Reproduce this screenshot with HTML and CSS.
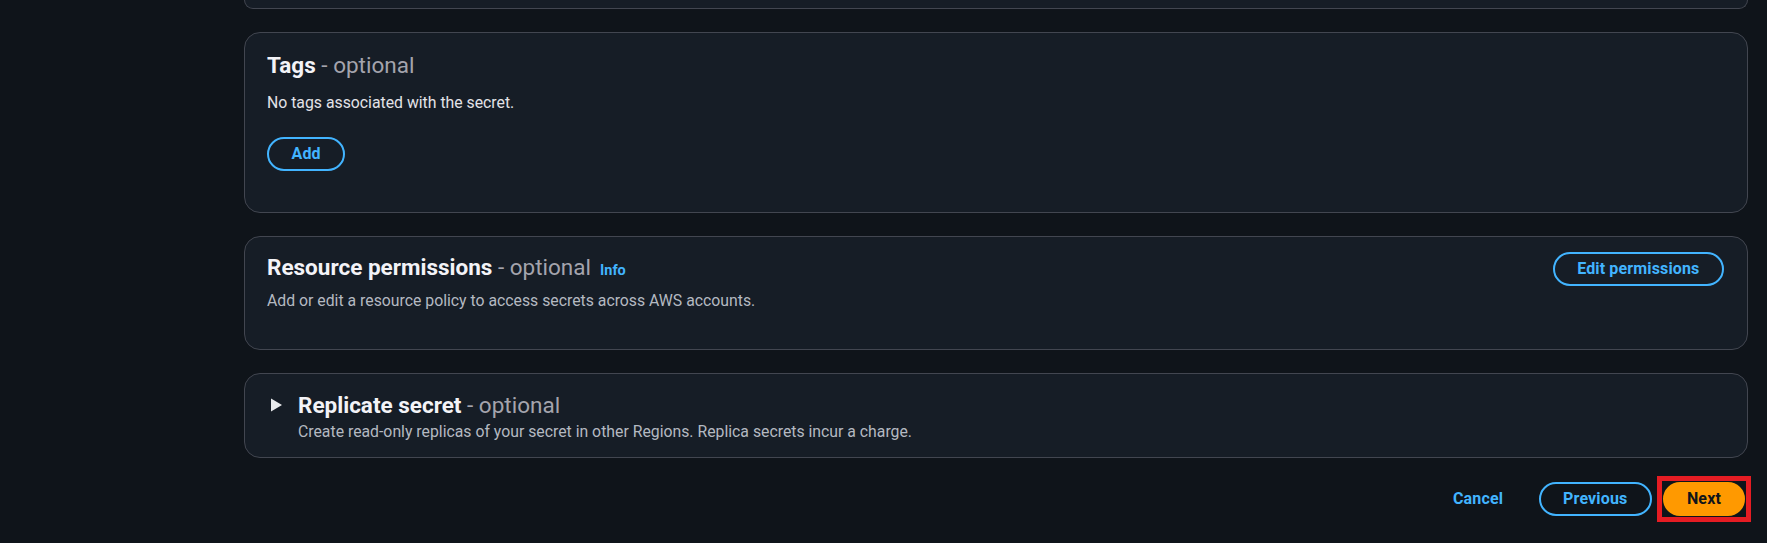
FILE: index.html
```html
<!DOCTYPE html>
<html lang="en">
<head>
<meta charset="utf-8">
<title>Store a new secret</title>
<link rel="stylesheet" href="styles.css">
</head>
<body>
<main class="page">
  <div class="card card-stub"></div>

  <section class="card card-tags">
    <div class="header-row">
      <h2 class="title"><span class="title-main">Tags</span><span class="title-opt"> - optional</span></h2>
    </div>
    <p class="body-text">No tags associated with the secret.</p>
    <div class="actions-left">
      <button class="btn btn-normal">Add</button>
    </div>
  </section>

  <section class="card card-perm">
    <div class="header-row">
      <h2 class="title"><span class="title-main">Resource permissions</span><span class="title-opt"> - optional</span><a class="info" href="#">Info</a></h2>
      <button class="btn btn-normal">Edit permissions</button>
    </div>
    <p class="desc">Add or edit a resource policy to access secrets across AWS accounts.</p>
  </section>

  <section class="card card-repl">
    <div class="expand-row">
      <span class="caret"><svg width="18" height="18" viewBox="0 0 18 18"><polygon points="4,2.5 15,9 4,15.5" fill="#e9ebed"/></svg></span>
      <div class="expand-text">
        <h2 class="title"><span class="title-main">Replicate secret</span><span class="title-opt"> - optional</span></h2>
        <p class="desc desc-tight">Create read-only replicas of your secret in other Regions. Replica secrets incur a charge.</p>
      </div>
    </div>
  </section>

  <footer class="footer">
    <button class="btn btn-link">Cancel</button>
    <button class="btn btn-normal">Previous</button>
    <span class="highlight"><button class="btn btn-primary">Next</button></span>
  </footer>
</main>
</body>
</html>
```

FILE: styles.css
```css
* { box-sizing: border-box; }

html, body {
  margin: 0;
  padding: 0;
  background: #0f141a;
  height: 100%;
}

body {
  font-family: Roboto, "Liberation Sans", Arial, sans-serif;
  color: #dedee3;
}

.page {
  display: flex;
  flex-direction: column;
  gap: 23px;
  padding: 0 19px 0 244px;
}

.card {
  background: #161d26;
  border: 1px solid #424650;
  border-radius: 16px;
}

.card-stub {
  height: 9px;
  border-top: none;
  border-radius: 0 0 16px 16px;
}

.card-tags {
  padding: 15px 23px 41px 22px;
}

.card-perm {
  padding: 15px 23px 37px 22px;
}

.card-repl {
  padding: 17px 23px 14px 22px;
}

.header-row {
  display: flex;
  align-items: center;
  justify-content: space-between;
  min-height: 34px;
}

.title {
  margin: 0;
  font-size: 22.5px;
  line-height: 28px;
  font-weight: 400;
}

.title-main {
  font-weight: 700;
  color: #f3f3f7;
}

.title-opt {
  color: #a4a4ad;
}

.info {
  margin-left: 9px;
  font-size: 14.5px;
  font-weight: 700;
  color: #42b4ff;
  text-decoration: none;
}

.body-text {
  margin: 10px 0 0;
  font-size: 15.8px;
  line-height: 22px;
  color: #e3e3e8;
}

.desc {
  margin: 4px 0 0;
  font-size: 15.8px;
  line-height: 22px;
  color: #b4b9c1;
}

.desc-tight {
  margin-top: 2px;
}

.actions-left {
  margin-top: 23px;
  display: flex;
}

.btn {
  height: 34px;
  padding: 0 22.5px;
  border: 2px solid #42b4ff;
  border-radius: 20px;
  background: transparent;
  color: #42b4ff;
  font-family: Roboto, "Liberation Sans", Arial, sans-serif;
  font-size: 16px;
  font-weight: 700;
  letter-spacing: 0.15px;
  line-height: 20px;
  cursor: pointer;
}

.btn-link {
  border-color: transparent;
}

.highlight {
  display: flex;
  outline: 5px solid #e51c23;
  outline-offset: 1px;
}

.btn-primary {
  background: #ff9900;
  border-color: #ff9900;
  color: #0f141a;
  padding: 0 22px;
}

.expand-row {
  display: flex;
  align-items: flex-start;
}

.caret {
  display: flex;
  width: 18px;
  height: 18px;
  margin-top: 5px;
  margin-right: 13px;
}

.expand-text {
  display: flex;
  flex-direction: column;
}

.footer {
  display: flex;
  justify-content: flex-end;
  gap: 11px;
  margin-top: 1px;
  padding-right: 3px;
}
```
